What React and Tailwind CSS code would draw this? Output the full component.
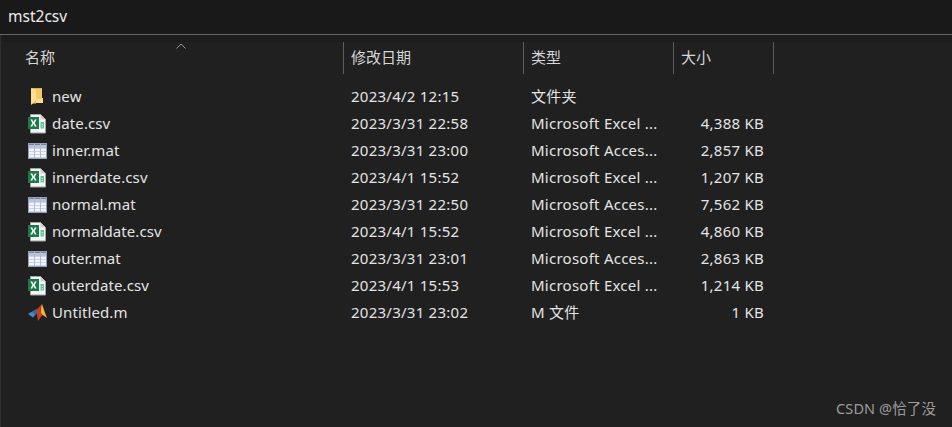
const FONT = '"Noto Sans", "Noto Sans CJK SC", sans-serif';

const ROWS = [
  { name: 'new', icon: 'folder', date: '2023/4/2 12:15', type: '文件夹', size: '' },
  { name: 'date.csv', icon: 'excel', date: '2023/3/31 22:58', type: 'Microsoft Excel ...', size: '4,388 KB' },
  { name: 'inner.mat', icon: 'table', date: '2023/3/31 23:00', type: 'Microsoft Acces...', size: '2,857 KB' },
  { name: 'innerdate.csv', icon: 'excel', date: '2023/4/1 15:52', type: 'Microsoft Excel ...', size: '1,207 KB' },
  { name: 'normal.mat', icon: 'table', date: '2023/3/31 22:50', type: 'Microsoft Acces...', size: '7,562 KB' },
  { name: 'normaldate.csv', icon: 'excel', date: '2023/4/1 15:52', type: 'Microsoft Excel ...', size: '4,860 KB' },
  { name: 'outer.mat', icon: 'table', date: '2023/3/31 23:01', type: 'Microsoft Acces...', size: '2,863 KB' },
  { name: 'outerdate.csv', icon: 'excel', date: '2023/4/1 15:53', type: 'Microsoft Excel ...', size: '1,214 KB' },
  { name: 'Untitled.m', icon: 'matlab', date: '2023/3/31 23:02', type: 'M 文件', size: '1 KB' },
];

function FolderIcon() {
  return (
    <svg width="20" height="20" viewBox="0 0 20 20">
      <path d="M4 1h11v10H4z" fill="#e2b04c" />
      <path d="M9 11h7v5H9z" fill="#fbdd8c" />
      <path d="M9 2h6v10H9z" fill="#f5c969" />
      <path d="M4 1.500l5 1V14l-5 4z" fill="#fde08f" />
      <path d="M9 14v2.500H4.500z" fill="#f3cc72" />
    </svg>
  );
}

function ExcelIcon() {
  return (
    <svg width="20" height="20" viewBox="0 0 20 20">
      <path d="M3.500.5h10l5 5v13.500h-15z" fill="#f6f6f6" stroke="#a3a3a3" strokeWidth="1" />
      <path d="M13.500.5v5h5z" fill="#cfcfcf" />
      <rect x="1" y="3" width="11" height="12" fill="#1b7a4a" />
      <path d="M3.300 5.500h1.900L6.500 8l1.300-2.500h1.900L7.600 9l2.100 3.500H7.800L6.500 10l-1.300 2.500H3.300L5.400 9z" fill="#fff" />
      <path d="M13.500 8h3.500v6.500h-3.500z" fill="#5cc49a" />
      <path d="M14.800 10h1v1h-1zM14.800 12.200h1v1h-1z" fill="#f6f6f6" />
    </svg>
  );
}

function TableIcon() {
  return (
    <svg width="20" height="20" viewBox="0 0 20 20">
      <rect x="1" y="2" width="19" height="16" fill="#f2f4f9" />
      <rect x="1" y="2" width="19" height="2" fill="#77849f" />
      <rect x="1" y="4" width="19" height="3" fill="#b9c4da" />
      <path d="M1 7.500h19M1 10.500h19M1 13.500h19M1 16.500h19" stroke="#ccd4e4" strokeWidth="1" />
      <path d="M7.500 2v16M13.500 2v16" stroke="#b0bad0" strokeWidth="1" />
      <rect x="1.500" y="2.500" width="18" height="15" fill="none" stroke="#97a2ba" />
    </svg>
  );
}

function MatlabIcon() {
  return (
    <svg width="20" height="20" viewBox="0 0 20 20">
      <path d="M1 11l6-3.500 2.500 3L6 14.500z" fill="#3f8fd0" />
      <path d="M5 9l4-3 2 3-3 3z" fill="#2b6ea8" />
      <path d="M15 1c-1.500 3-2 6-1 9l1.500 2c-1.500 1.500-3 4-4.500 6-.5-3.500-1-7-2-11 2-1.500 4-4 6-6z" fill="#c8401d" />
      <path d="M15 1c1.500 4 3 9 5 14-1.500-1-3-2.500-4.500-3L14 10c-.5-3 0-6 1-9z" fill="#f4b13a" />
    </svg>
  );
}

const ICONS = { folder: FolderIcon, excel: ExcelIcon, table: TableIcon, matlab: MatlabIcon };

function HeaderCell({ width, pad, children }) {
  return (
    <div style={{ width }} className={`flex h-[32px] shrink-0 items-center border-r border-[#5c5c5c] pb-[2px] ${pad}`}>
      {children}
    </div>
  );
}

function Row({ row }) {
  const Icon = ICONS[row.icon];
  return (
    <div className="flex h-[27px] items-center text-[15px] tracking-[0.25px] text-[#e4e4e4]">
      <div className="flex w-[343px] shrink-0 items-center gap-[5px] pl-[26px] tracking-[0.1px]">
        <Icon />
        <span>{row.name}</span>
      </div>
      <div className="w-[180px] shrink-0 pl-[7px]">{row.date}</div>
      <div className="w-[150px] shrink-0 whitespace-nowrap pl-[7px]">{row.type}</div>
      <div className="w-[90px] shrink-0 text-right">{row.size}</div>
    </div>
  );
}

export default function App() {
  return (
    <div className="relative flex h-[427px] w-[952px] flex-col overflow-hidden bg-[#202020]" style={{ fontFamily: FONT }}>
      <div className="flex h-[34px] items-center bg-[#191919] pl-[8px] text-[15.5px] text-[#ececec]">mst2csv</div>
      <div className="h-px bg-[#656565]" />
      <div className="relative flex-1 border-l border-[#2e2e2e] pl-px">
        <div className="h-[7px] bg-[#1c1c1c]" />
        <div className="flex text-[15px] text-[#d6d6d6]">
          <HeaderCell width={342} pad="pl-[23px]">名称</HeaderCell>
          <HeaderCell width={180} pad="pl-[7px]">修改日期</HeaderCell>
          <HeaderCell width={150} pad="pl-[7px]">类型</HeaderCell>
          <HeaderCell width={100} pad="pl-[7px]">大小</HeaderCell>
        </div>
        <svg className="absolute left-[174px] top-[8px]" width="12" height="6" viewBox="0 0 12 6">
          <path d="M1.500 5.500L6 1l4.500 4.500" fill="none" stroke="#9a9a9a" strokeWidth="1" />
        </svg>
        <div className="mt-[9px] -ml-px">
          {ROWS.map((row) => (
            <Row key={row.name} row={row} />
          ))}
        </div>
      </div>
      <div className="absolute bottom-[7px] right-[16px] text-[14.5px] tracking-[0.1px] text-[#9c9c9c]">CSDN @恰了没</div>
    </div>
  );
}
